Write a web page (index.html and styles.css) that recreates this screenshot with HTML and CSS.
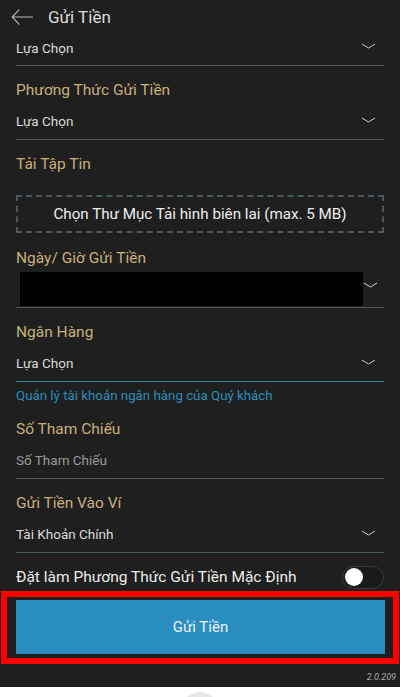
FILE: index.html
```html
<!DOCTYPE html>
<html lang="vi">
<head>
<meta charset="utf-8">
<title>Gửi Tiền</title>
<link rel="stylesheet" href="styles.css">
</head>
<body>
<div class="app">
  <header class="header">
    <svg class="back" width="22" height="18" viewBox="0 0 22 18">
      <path d="M21.5 9H1.5M8 1.8L1.2 9l6.8 7.2" fill="none" stroke="#b8b8b8" stroke-width="1.1" stroke-linecap="round" stroke-linejoin="round"/>
    </svg>
    <h1 class="title">Gửi Tiền</h1>
  </header>

  <main class="form">
    <div class="select first">
      <span class="value">Lựa Chọn</span>
      <svg class="chev" width="15" height="6" viewBox="0 0 15 6"><polyline points="1,1 7.5,5 14,1" fill="none" stroke="#cfcfcf" stroke-width="1"/></svg>
    </div>

    <div class="label">Phương Thức Gửi Tiền</div>
    <div class="select">
      <span class="value">Lựa Chọn</span>
      <svg class="chev" width="15" height="6" viewBox="0 0 15 6"><polyline points="1,1 7.5,5 14,1" fill="none" stroke="#cfcfcf" stroke-width="1"/></svg>
    </div>

    <div class="label">Tải Tập Tin</div>
    <div class="upload">Chọn Thư Mục Tải hình biên lai (max. 5 MB)</div>

    <div class="label label-after-box">Ngày/ Giờ Gửi Tiền</div>
    <div class="select date">
      <span class="redact"></span>
      <svg class="chev" width="15" height="6" viewBox="0 0 15 6"><polyline points="1,1 7.5,5 14,1" fill="none" stroke="#cfcfcf" stroke-width="1"/></svg>
    </div>

    <div class="label">Ngân Hàng</div>
    <div class="select accent">
      <span class="value">Lựa Chọn</span>
      <svg class="chev" width="15" height="6" viewBox="0 0 15 6"><polyline points="1,1 7.5,5 14,1" fill="none" stroke="#cfcfcf" stroke-width="1"/></svg>
    </div>
    <div class="helper">Quản lý tài khoản ngân hàng của Quý khách</div>

    <div class="label label-after-helper">Số Tham Chiếu</div>
    <div class="select">
      <span class="value placeholder">Số Tham Chiếu</span>
    </div>

    <div class="label">Gửi Tiền Vào Ví</div>
    <div class="select">
      <span class="value">Tài Khoản Chính</span>
      <svg class="chev" width="15" height="6" viewBox="0 0 15 6"><polyline points="1,1 7.5,5 14,1" fill="none" stroke="#cfcfcf" stroke-width="1"/></svg>
    </div>

    <div class="toggle-row">
      <span class="toggle-text">Đặt làm Phương Thức Gửi Tiền Mặc Định</span>
      <span class="toggle"><span class="knob"></span></span>
    </div>
  </main>

  <div class="highlight">
    <button class="submit" type="button">Gửi Tiền</button>
  </div>

  <div class="version">2.0.209</div>
</div>
<div class="navbar"><span class="home"></span></div>
</body>
</html>
```

FILE: styles.css
```css
* { box-sizing: border-box; }

html, body {
  margin: 0;
  padding: 0;
  background: #ffffff;
  font-family: Roboto, "Noto Sans", "DejaVu Sans", sans-serif;
}

.app {
  height: 687px;
  background: #1f1f1f;
  overflow: hidden;
}

.header {
  height: 30px;
  display: flex;
  align-items: center;
  padding: 3px 0 0 11px;
}

.back { display: block; flex: none; }

.title {
  margin: 0 0 0 15px;
  font-size: 17px;
  font-weight: 400;
  color: #dcdcdc;
  line-height: 22px;
}

.form {
  padding: 0 16px;
}

.select {
  height: 40px;
  padding-top: 3px;
  display: flex;
  align-items: center;
  border-bottom: 1px solid #4b5c64;
}

.select.first {
  height: 36px;
  padding-top: 0;
}

.select.accent { border-bottom-color: #3a8897; }

.value {
  flex: 1;
  font-size: 13.5px;
  line-height: 18px;
  color: #dadada;
}

.placeholder { color: #9c9c9c; }

.chev {
  flex: none;
  margin: -3px 8px 0 0;
  display: block;
}

.label {
  margin-top: 14px;
  height: 20px;
  line-height: 20px;
  font-size: 15.5px;
  color: #c8b07a;
}

.label-after-box { margin-top: 15px; }
.label-after-helper { margin-top: 15px; }

.upload {
  margin-top: 21px;
  height: 38px;
  border: 2px dashed #4a5961;
  display: flex;
  align-items: center;
  justify-content: center;
  font-size: 15.2px;
  color: #eeeeee;
}

.select.date {
  height: 40px;
  padding-top: 0;
  align-items: flex-start;
}

.redact {
  flex: none;
  width: 343px;
  height: 34px;
  margin: 4px 0 0 4px;
  background: #000000;
}

.select.date .chev {
  margin-left: auto;
  margin-top: 14px;
}

.helper {
  margin-top: 6px;
  height: 16px;
  line-height: 16px;
  font-size: 13.3px;
  color: #2b8dbb;
}

.toggle-row {
  margin-top: 12px;
  height: 24px;
  display: flex;
  align-items: center;
  justify-content: space-between;
}

.toggle-text {
  font-size: 15.5px;
  color: #ececec;
}

.toggle {
  width: 42px;
  height: 23px;
  border: 1px solid #3a3a3a;
  border-radius: 12px;
  background: #1a1a1a;
  display: flex;
  align-items: center;
  padding-left: 2px;
}

.knob {
  width: 18px;
  height: 18px;
  border-radius: 50%;
  background: #ffffff;
}

.highlight {
  margin: 2px 1px 0 1px;
  width: 398px;
  height: 73px;
  border: 6px solid #ff0000;
  padding: 3px 8px 4px 9px;
}

.submit {
  display: block;
  width: 100%;
  height: 54px;
  border: 0;
  margin: 0;
  background: #2a8dc0;
  color: #e9f1f5;
  font-family: Roboto, "Noto Sans", "DejaVu Sans", sans-serif;
  font-size: 15px;
}

.version {
  margin-top: 7px;
  padding-right: 4px;
  text-align: right;
  font-size: 9px;
  line-height: 12px;
  font-style: italic;
  color: #a8a8a8;
}

.navbar {
  height: 10px;
  overflow: hidden;
  background: #ffffff;
}

.home {
  display: block;
  width: 38px;
  height: 38px;
  margin: 5px auto 0;
  border-radius: 50%;
  background: #e6e6e6;
}
```
